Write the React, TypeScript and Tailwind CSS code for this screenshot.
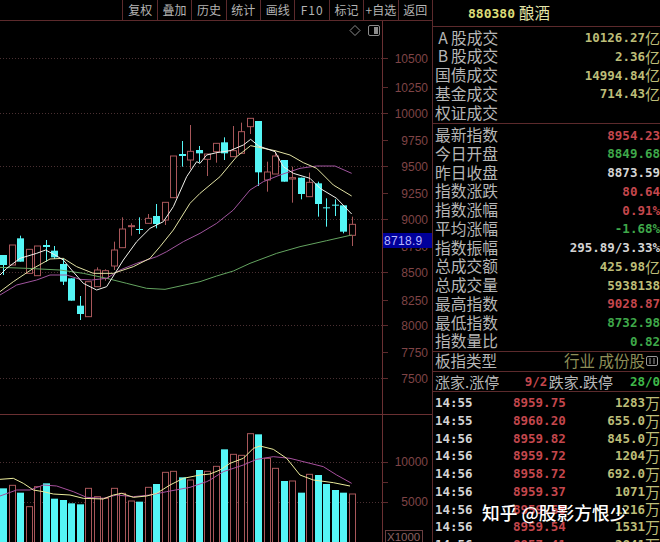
import type { ReactNode } from "react";

const CJK = "font-['Noto_Sans_CJK_SC',sans-serif]";
const NUM = "mt-[2px] font-['DejaVu_Sans_Mono','Noto_Sans_CJK_SC',monospace] font-bold text-[12.5px] leading-none";

const YELLOW = "text-[#bdbd78]";
const RED = "text-[#c4474d]";
const GREEN = "text-[#3fa84a]";
const WHITE = "text-[#d4d4d4]";

const CYAN = "#55f6f6";
const HOLLOW = "#a8575a";

const TOOLS = ["复权", "叠加", "历史", "统计", "画线", "F10", "标记", "+自选", "返回"];

const cx = (i: number) => 3.3 + 8.5 * i;
const py = (z: number) => 110 + z / 3;

// [up?, bodyTop, bodyBottom, wickTop, wickBottom], read at 3x from y=110
const CANDLES: [boolean, number, number, number, number][] = [
  [false, 435, 465, 435, 495],
  [true, 405, 465, 405, 465],
  [false, 385, 455, 377, 455],
  [true, 418, 490, 418, 490],
  [true, 408, 497, 408, 497],
  [false, 405, 411, 390, 455],
  [false, 422, 442, 408, 447],
  [false, 462, 515, 445, 525],
  [false, 505, 572, 505, 572],
  [false, 587, 612, 558, 630],
  [true, 515, 620, 515, 620],
  [true, 480, 530, 472, 530],
  [true, 482, 505, 478, 512],
  [true, 420, 468, 395, 480],
  [true, 357, 413, 322, 413],
  [true, 347, 350, 340, 377],
  [false, 357, 360, 322, 372],
  [true, 325, 340, 312, 340],
  [false, 318, 342, 282, 355],
  [true, 277, 330, 277, 345],
  [true, 138, 263, 138, 263],
  [false, 132, 138, 93, 170],
  [true, 124, 150, 45, 178],
  [false, 120, 130, 108, 157],
  [true, 132, 148, 132, 198],
  [true, 100, 125, 100, 158],
  [false, 97, 130, 82, 150],
  [true, 122, 140, 48, 140],
  [true, 65, 130, 38, 130],
  [true, 25, 50, 25, 72],
  [false, 33, 187, 33, 228],
  [true, 186, 210, 155, 245],
  [true, 138, 192, 125, 192],
  [false, 150, 215, 150, 215],
  [true, 203, 207, 170, 278],
  [false, 203, 252, 203, 268],
  [true, 217, 260, 188, 260],
  [false, 220, 282, 215, 320],
  [false, 292, 295, 265, 350],
  [false, 284, 287, 268, 318],
  [false, 286, 365, 286, 370],
  [true, 343, 376, 320, 408],
];

type Pts = [number, number][];
const pts = (a: Pts, b: Pts) =>
  [...a.map(([x, y]) => `${x / 3},${py(y)}`), ...b.map(([x, y]) => `${200 + x / 3},${py(y)}`)].join(" ");

const MA5 = pts(
  [[0, 495], [20, 475], [60, 445], [110, 430], [137, 420], [165, 435], [190, 450], [215, 480], [250, 520], [290, 540], [320, 530], [345, 490], [370, 450], [410, 395], [450, 355], [490, 335], [520, 290], [560, 200], [590, 155]],
  [[0, 160], [20, 135], [50, 128], [90, 122], [130, 105], [152, 88], [176, 108], [225, 125], [250, 170], [280, 190], [330, 205], [360, 235], [410, 265], [455, 312]],
);
const MA10 = pts(
  [[0, 545], [40, 515], [100, 475], [150, 447], [190, 445], [230, 470], [280, 490], [340, 490], [400, 470], [450, 445], [480, 410], [520, 360], [570, 280]],
  [[0, 250], [60, 200], [110, 140], [152, 107], [176, 112], [225, 122], [270, 135], [310, 158], [350, 175], [400, 225], [455, 258]],
);
const MA20 = pts(
  [[0, 555], [50, 525], [110, 510], [150, 495], [200, 495], [240, 508], [275, 510], [320, 505], [360, 480], [410, 460], [470, 440], [500, 425], [550, 395]],
  [[0, 370], [50, 340], [100, 300], [150, 240], [190, 215], [240, 195], [300, 175], [350, 168], [405, 168], [455, 190]],
);
const MA60 = pts(
  [[0, 472], [80, 475], [180, 480], [250, 490], [320, 505], [380, 520], [440, 535], [495, 538]],
  [[0, 515], [50, 498], [100, 483], [150, 460], [230, 430], [300, 410], [380, 392], [455, 375]],
);

const AXIS = [
  ["10500", 58], ["10250", 87], ["10000", 113], ["9750", 140], ["9500", 166], ["9250", 193], ["9000", 219],
  ["8750", 246], ["8500", 272], ["8250", 300], ["8000", 325], ["7750", 352], ["7500", 378],
] as const;
const DOTTED = [58, 113, 166, 219, 272, 325, 378];

// [up?, top] in 3x px from y=400
const VOLS: [boolean, number][] = [
  [false, 265], [true, 256], [false, 278], [true, 320], [true, 260], [false, 250], [false, 296], [false, 300], [false, 310], [false, 313],
  [true, 265], [true, 290], [true, 295], [true, 265], [true, 280], [true, 303], [false, 305], [true, 262], [false, 252], [true, 217],
  [true, 214], [false, 232], [true, 240], [false, 210], [true, 214], [true, 199], [false, 148], [true, 163], [true, 166], [true, 101],
  [false, 103], [true, 175], [true, 205], [false, 243], [true, 243], [false, 278], [true, 223], [false, 225], [false, 252], [false, 270],
  [false, 278], [true, 282],
];

const vpts = (a: Pts, b: Pts) =>
  [...a.map(([x, y]) => `${x / 3},${400 + y / 3}`), ...b.map(([x, y]) => `${210 + x / 3},${400 + y / 3}`)].join(" ");
const VMA1 = vpts(
  [[0, 238], [40, 235], [70, 250], [100, 270], [130, 275], [160, 282], [210, 285], [250, 295], [310, 297], [340, 285], [365, 280], [400, 292], [440, 288], [470, 280], [510, 255], [550, 235], [600, 225]],
  [[0, 222], [30, 210], [60, 190], [100, 175], [130, 145], [150, 138], [190, 148], [230, 175], [270, 225], [310, 240], [370, 248], [420, 258]],
);
const VMA2 = vpts(
  [[0, 288], [50, 270], [90, 270], [130, 255], [170, 258], [220, 275], [260, 292], [310, 295], [350, 285], [400, 290], [450, 285], [500, 275], [570, 262], [620, 245]],
  [[0, 240], [40, 215], [100, 195], [140, 178], [190, 170], [240, 175], [340, 200], [380, 225], [425, 250]],
);

const BA = (c: string) => <span className="inline-block w-4 text-center">{c}</span>;

const TURNOVER: [ReactNode, string, string][] = [
  [<>{BA("A")}股成交</>, "10126.27", "亿"],
  [<>{BA("B")}股成交</>, "2.36", "亿"],
  ["国债成交", "14994.84", "亿"],
  ["基金成交", "714.43", "亿"],
  ["权证成交", "", ""],
];

const STATS: [string, string, string, string][] = [
  ["最新指数", "8954.23", "", RED],
  ["今日开盘", "8849.68", "", GREEN],
  ["昨日收盘", "8873.59", "", WHITE],
  ["指数涨跌", "80.64", "", RED],
  ["指数涨幅", "0.91%", "", RED],
  ["平均涨幅", "-1.68%", "", GREEN],
  ["指数振幅", "295.89/3.33%", "", WHITE],
  ["总成交额", "425.98", "亿", YELLOW],
  ["总成交量", "5938138", "", YELLOW],
  ["最高指数", "9028.87", "", RED],
  ["最低指数", "8732.98", "", GREEN],
  ["指数量比", "0.82", "", GREEN],
];

const TICKS = [
  ["14:55", "8959.75", "1283"],
  ["14:55", "8960.20", "655.0"],
  ["14:56", "8959.82", "845.0"],
  ["14:56", "8959.72", "1204"],
  ["14:56", "8958.72", "692.0"],
  ["14:56", "8959.37", "1071"],
  ["14:56", "8959.68", "1216"],
  ["14:56", "8959.54", "1531"],
  ["14:56", "8957.41", "2841"],
];

function Row({ label, value, unit, color }: { label: ReactNode; value: string; unit: string; color: string }) {
  return (
    <div className="flex h-[18.75px] items-center justify-between pl-[2px]">
      <span className={`${CJK} text-[15.75px] leading-none text-[#b6b6b6]`}>{label}</span>
      <span className={`flex items-center ${color}`}>
        <span className={NUM}>{value}</span>
        {unit && <span className={`${CJK} text-[15px] leading-none`}>{unit}</span>}
      </span>
    </div>
  );
}

function Toolbar() {
  return (
    <div className={`flex h-[21px] shrink-0 justify-end border-b border-[#5c2a2c] ${CJK}`}>
      {TOOLS.map((t) => (
        <div
          key={t}
          className={`flex w-[34.4px] items-center justify-center border-l border-[#5c2a2c] text-[12px] leading-none whitespace-nowrap text-[#b4b4b4] ${t === "F10" ? "tracking-[1px]" : ""}`}
        >
          {t}
        </div>
      ))}
    </div>
  );
}

function PriceChart() {
  return (
    <svg viewBox="0 21 432 393" className="block h-[393px] w-[432px] shrink-0">
      {DOTTED.map((y) => (
        <line key={y} x1="0" x2="382" y1={y + 0.5} y2={y + 0.5} stroke="#4a3032" strokeDasharray="1 2" />
      ))}
      <line x1="382.5" x2="382.5" y1="21" y2="414" stroke="#6a3032" />
      {AXIS.map(([t, y]) => (
        <g key={t}>
          <line x1="382" x2="388" y1={y + 0.5} y2={y + 0.5} stroke="#5c2a2c" />
          <text x="428" y={y + 5} textAnchor="end" fontFamily="Liberation Sans" fontSize="12" fill="#7f4446">{t}</text>
        </g>
      ))}

      <path d="M355 25.5 L360 30.5 L355 35.5 L350 30.5 Z" fill="none" stroke="#8c8c8c" />
      <rect x="368.5" y="25.5" width="11" height="10" rx="1.5" fill="none" stroke="#8c8c8c" />
      <rect x="374" y="27" width="4" height="7" fill="#8c8c8c" />

      {CANDLES.map(([up, t, b, wt, wb], i) => {
        const x = Math.round(cx(i)) + 0.5;
        const c = up ? HOLLOW : CYAN;
        return (
          <g key={i}>
            <line x1={x} x2={x} y1={py(wt)} y2={py(wb)} stroke={c} />
            {up ? (
              <rect x={x - 3} y={py(t)} width="6" height={py(b) - py(t)} fill="#000" stroke={c} />
            ) : (
              <rect x={x - 3.5} y={py(t)} width="7" height={Math.max(py(b) - py(t), 1)} fill={c} />
            )}
          </g>
        );
      })}

      <polyline points={MA60} fill="none" stroke="#64a460" />
      <polyline points={MA20} fill="none" stroke="#a0549e" />
      <polyline points={MA10} fill="none" stroke="#e3e3a4" />
      <polyline points={MA5} fill="none" stroke="#f2f2ec" />

      <rect x="383" y="233" width="49" height="15" fill="#00009a" />
      <text x="384" y="245" fontFamily="Liberation Sans" fontSize="12" letterSpacing="0.3" fill="#b8b8ff">8718.9</text>
    </svg>
  );
}

function VolumeChart() {
  return (
    <svg viewBox="0 414 432 128" className="block h-[128px] w-[432px] shrink-0">
      <line x1="0" x2="432" y1="414.5" y2="414.5" stroke="#6a3032" />
      <line x1="382.5" x2="382.5" y1="414" y2="542" stroke="#6a3032" />
      <line x1="0" x2="382" y1="462.5" y2="462.5" stroke="#4a3032" strokeDasharray="1 2" />
      <line x1="0" x2="382" y1="502.5" y2="502.5" stroke="#4a3032" strokeDasharray="1 2" />
      {[462, 482, 502].map((y) => (
        <line key={y} x1="382" x2="388" y1={y + 0.5} y2={y + 0.5} stroke="#5c2a2c" />
      ))}
      {VOLS.map(([up, t], i) => {
        const x = Math.round(cx(i)) + 0.5;
        const y = 400 + t / 3;
        return up ? (
          <rect key={i} x={x - 3} y={y} width="6" height={550 - y} fill="#000" stroke={HOLLOW} />
        ) : (
          <rect key={i} x={x - 3.5} y={y} width="7" height={550 - y} fill={CYAN} />
        );
      })}
      <polyline points={VMA2} fill="none" stroke="#a8509e" />
      <polyline points={VMA1} fill="none" stroke="#ecec9c" />
      <text x="428" y="466" textAnchor="end" fontFamily="Liberation Sans" fontSize="12" fill="#7f4446">10000</text>
      <text x="428" y="506" textAnchor="end" fontFamily="Liberation Sans" fontSize="12" fill="#7f4446">5000</text>
      <rect x="385.5" y="530.5" width="37" height="14" fill="none" stroke="#6a3f40" />
      <text x="387" y="541" fontFamily="Liberation Sans" fontSize="11.5" fill="#8a6061">X1000</text>
    </svg>
  );
}

function SidePanel() {
  return (
    <div className="relative h-[542px] min-w-0 flex-1 overflow-hidden border-l border-[#5c2a2c]">
      <div className="flex h-[27px] items-center border-b border-[#5c2a2c] pl-[35px]">
        <span className="font-['DejaVu_Sans_Mono',monospace] text-[13px] font-bold leading-none text-[#dcdc78]">880380</span>
        <span className={`${CJK} ml-1 text-[15.5px] leading-none text-[#e4e4a8]`}>酿酒</span>
      </div>
      <div className="flex h-[97px] flex-col border-b border-[#5c2a2c] pt-px">
        {TURNOVER.map(([l, v, u], i) => (
          <Row key={i} label={l} value={v} unit={u} color={YELLOW} />
        ))}
      </div>
      <div className="flex h-[228px] flex-col border-b border-[#5c2a2c] pt-[1.5px]">
        {STATS.map(([l, v, u, c]) => (
          <Row key={l} label={l} value={v} unit={u} color={c} />
        ))}
      </div>
      <div className={`flex h-[20px] items-center justify-between border-b border-[#5c2a2c] pb-[2px] pl-[2px] pr-[2px] ${CJK} text-[15.5px] leading-none`}>
        <span className="text-[#b6b6b6]">板指类型</span>
        <span className="flex items-center gap-[1px] text-[#8e8e58]">
          行业 成份股
          <svg viewBox="0 0 12 12" className="size-3">
            <rect x="0.5" y="1.5" width="11" height="9" rx="1.5" fill="none" stroke="#9a9a9a" />
            <path d="M3 4h2M3 6h2M3 8h2M7 4h2M7 6h2M7 8h2" stroke="#9a9a9a" />
          </svg>
        </span>
      </div>
      <div className={`flex h-[20px] items-center whitespace-nowrap border-b border-[#5c2a2c] pl-[2px] ${CJK} text-[15px] leading-none text-[#b6b6b6]`}>
        <span className="w-[93px]">涨家.涨停</span>
        <span className={`${NUM} w-[25px] ${RED}`}>9/2</span>
        <span className="w-[84px]">跌家.跌停</span>
        <span className={`${NUM} text-[#3fb84a]`}>28/0</span>
      </div>
      <div className="flex flex-col pt-[1.5px]">
        {TICKS.map(([t, p, v], i) => (
          <div key={i} className="flex h-[17.75px] items-center pl-[2px]">
            <span className={`${NUM} w-[78px] ${WHITE}`}>{t}</span>
            <span className={`${NUM} w-[60px] ${RED}`}>{p}</span>
            <span className={`ml-auto flex items-center ${YELLOW}`}>
              <span className={NUM}>{v}</span>
              <span className={`${CJK} text-[15px] leading-none`}>万</span>
            </span>
          </div>
        ))}
      </div>
      <div className={`absolute left-[49px] top-[500px] whitespace-nowrap ${CJK} text-[17.75px] leading-6 font-medium text-white`}>
        知乎 @股影方恨少
      </div>
    </div>
  );
}

export default function App() {
  return (
    <div className="flex h-[542px] w-[660px] overflow-hidden bg-black">
      <div className="flex w-[432px] shrink-0 flex-col">
        <Toolbar />
        <PriceChart />
        <VolumeChart />
      </div>
      <SidePanel />
    </div>
  );
}
